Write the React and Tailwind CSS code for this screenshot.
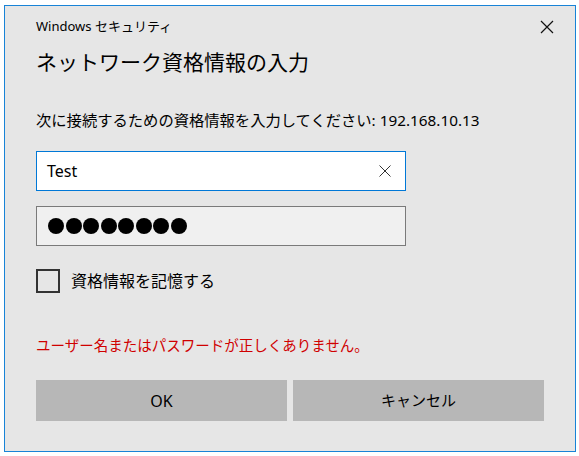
export default function App() {
  const font = { fontFamily: '"Noto Sans", "Noto Sans CJK JP", sans-serif' };

  return (
    <div className="min-h-screen bg-white pt-[5px] pl-[4px]" style={font}>
      <div className="flex h-[447px] w-[572px] flex-col border border-[#1883d7] bg-[#e6e6e6] pl-[31px] pr-[30px] text-[#000]">
        <div className="mr-[-17px] flex h-[42px] items-center justify-between">
          <span className="text-[13px]">Windows セキュリティ</span>
          <button className="grid h-[30px] w-[30px] place-items-center">
            <svg width="14" height="14" viewBox="0 0 14 14">
              <path d="M1 1L13 13M13 1L1 13" stroke="#111" strokeWidth="1.2" />
            </svg>
          </button>
        </div>

        <h1 className="mt-[-2px] h-[32px] text-[21px] leading-[32px]">ネットワーク資格情報の入力</h1>

        <p className="mt-[30px] text-[15.3px] leading-[24px]">
          次に接続するための資格情報を入力してください: 192.168.10.13
        </p>

        <div className="mt-[19px] flex h-[40px] w-[370px] items-center border border-[#0078d7] bg-white pl-[10px] pr-[14px]">
          <span className="flex-1 text-[16px]">Test</span>
          <svg width="12" height="12" viewBox="0 0 12 12">
            <path d="M0.5 0.5L11.5 11.5M11.5 0.5L0.5 11.5" stroke="#333" strokeWidth="1" />
          </svg>
        </div>

        <div className="mt-[15px] flex h-[40px] w-[370px] items-center gap-[1.5px] border border-[#7a7a7a] bg-[#f0f0f0] pl-[11px]">
          {[0, 1, 2, 3, 4, 5, 6, 7].map((i) => (
            <span key={i} className="h-[16px] w-[16px] rounded-full bg-black" />
          ))}
        </div>

        <label className="mt-[23px] flex h-[24px] items-center gap-[11px]">
          <span className="h-[24px] w-[24px] border-2 border-[#333] bg-[#e6e6e6]" />
          <span className="text-[16px]">資格情報を記憶する</span>
        </label>

        <p className="mt-[40px] text-[14.5px] leading-[24px] text-[#d00000]">
          ユーザー名またはパスワードが正しくありません。
        </p>

        <div className="mt-[23px] flex gap-[6px]">
          <button className="h-[41px] w-[251px] bg-[#b7b7b7] text-[16px]">OK</button>
          <button className="h-[41px] w-[251px] bg-[#b7b7b7] text-[15px]">キャンセル</button>
        </div>
      </div>
    </div>
  );
}
